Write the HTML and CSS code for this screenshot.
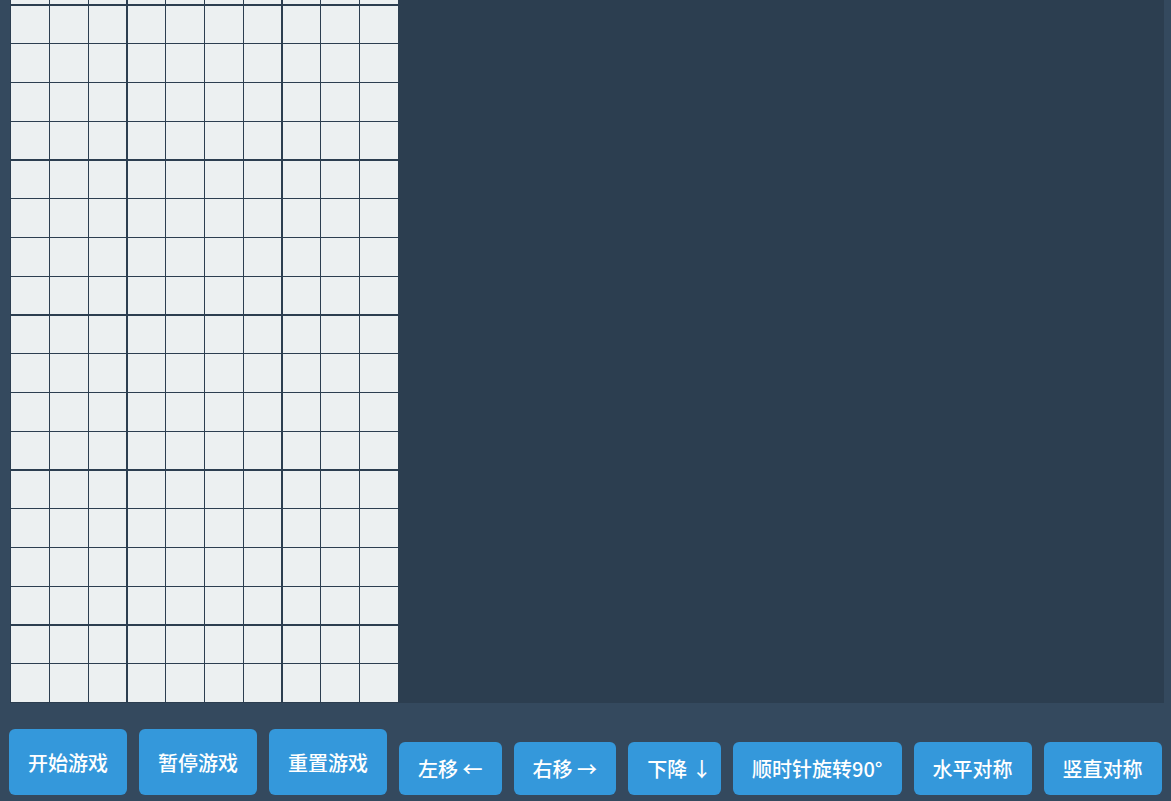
FILE: index.html
```html
<!DOCTYPE html>
<html lang="zh-CN">
<head>
    <meta charset="UTF-8">
    <meta name="viewport" content="width=device-width, initial-scale=1.0">
    <title>俄罗斯方块</title>
    <link rel="stylesheet" href="styles.css">
</head>
<body>
    <div id="game-area">
        <div id="board"></div>
    </div>
    <div id="controls">
        <button class="btn btn-main">开始游戏</button>
        <button class="btn btn-main">暂停游戏</button>
        <button class="btn btn-main">重置游戏</button>
        <button class="btn">左移 ←</button>
        <button class="btn">右移 →</button>
        <button class="btn btn-down">下降 ↓</button>
        <button class="btn">顺时针旋转90°</button>
        <button class="btn">水平对称</button>
        <button class="btn">竖直对称</button>
    </div>

    <script>
      // 生成 20 x 10 的棋盘格子
      const ROWS = 20;
      const COLS = 10;
      const board = document.getElementById('board');

      for (let r = 0; r < ROWS; r++) {
          for (let c = 0; c < COLS; c++) {
              const cell = document.createElement('div');
              cell.classList.add('cell');
              if (r % 4 === 2) cell.classList.add('cell-top');
              if (c % 4 === 3) cell.classList.add('cell-left');
              board.appendChild(cell);
          }
      }
    </script>
</body>
</html>
```

FILE: styles.css
```css
:root {
    --color-background: #34495e;
    --color-panel: #2c3e50;
    --color-cell: #ecf0f1;
    --color-button: #3498db;
    --color-text-light: #ffffff;
}

* {
    margin: 0;
    padding: 0;
    box-sizing: border-box;
}

body {
    font-family: "Noto Sans CJK SC", "Noto Sans", sans-serif;
    background: var(--color-background);
    height: 100vh;
    overflow: hidden;
}

#game-area {
    width: 1154px;
    height: 703px;
    margin-left: 10px;
    padding-bottom: 1px;
    background: var(--color-panel);
    display: flex;
    align-items: flex-end;
    overflow: hidden;
}

#board {
    display: grid;
    grid-template-columns: repeat(2, 38px 38px 37px 38px) 38px 38px;
    grid-template-rows: repeat(5, 38px 37px 38px 38px);
    gap: 1px;
    padding: 1px 0 0 1px;
    background: var(--color-panel);
}

.cell {
    background: var(--color-cell);
}

.cell-top {
    border-top: 1px solid var(--color-panel);
}

.cell-left {
    border-left: 1px solid var(--color-panel);
}

#controls {
    display: flex;
    align-items: flex-end;
    gap: 12px;
    padding: 0 0 0 9px;
    height: 92px;
}

.btn {
    font-family: "Noto Sans CJK SC", "Noto Sans", sans-serif;
    font-size: 20px;
    font-weight: 500;
    line-height: 29px;
    color: var(--color-text-light);
    background: var(--color-button);
    border: none;
    border-radius: 6px;
    padding: 12px 19px;
    cursor: pointer;
    white-space: nowrap;
}

.btn-main {
    padding: 18.5px 19px;
}

/* 向下箭头比左右箭头窄 */
.btn-down {
    padding-right: 9px;
    width: 93px;
    overflow: hidden;
}
```
